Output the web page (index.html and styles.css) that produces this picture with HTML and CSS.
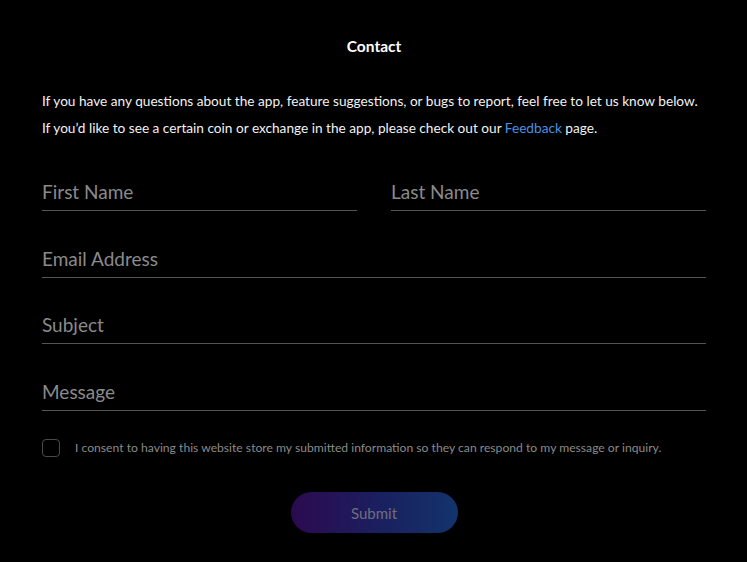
FILE: index.html
```html
<!DOCTYPE html>
<html>
<head>
<meta charset="utf-8">
<link rel="stylesheet" href="styles.css">
</head>
<body>
<main class="page">
  <h1 class="title">Contact</h1>
  <p class="intro">If you have any questions about the app, feature suggestions, or bugs to report, feel free to let us know below.</p>
  <p class="intro">If you’d like to see a certain coin or exchange in the app, please check out our <a class="link" href="#">Feedback</a> page.</p>
  <form class="form">
    <div class="row">
      <input class="field" type="text" placeholder="First Name">
      <input class="field" type="text" placeholder="Last Name">
    </div>
    <input class="field" type="email" placeholder="Email Address">
    <input class="field" type="text" placeholder="Subject">
    <input class="field" type="text" placeholder="Message">
    <label class="consent">
      <span class="box"></span>
      <span class="consent-text">I consent to having this website store my submitted information so they can respond to my message or inquiry.</span>
    </label>
    <div class="actions">
      <button class="submit" type="button">Submit</button>
    </div>
  </form>
</main>
</body>
</html>
```
FILE: styles.css
```css
html, body {
  margin: 0;
  padding: 0;
  background: #000;
}
body {
  font-family: "Lato", "Noto Sans", sans-serif;
  color: #fff;
}
.page {
  padding: 36px 41px 0 42px;
}
.title {
  margin: 0 0 35px;
  text-align: center;
  font-size: 15.5px;
  font-weight: 700;
  line-height: 20px;
  color: #fff;
}
.intro {
  margin: 0 0 7px;
  font-size: 13.65px;
  line-height: 20px;
  color: #f2f2f2;
}
.link {
  color: #4a90e2;
  text-decoration: none;
}
.form {
  display: flex;
  flex-direction: column;
  gap: 32.67px;
  margin-top: 39px;
}
.row {
  display: flex;
  gap: 34px;
}
.field {
  display: block;
  width: 100%;
  box-sizing: border-box;
  background: transparent;
  border: 0;
  border-bottom: 1px solid #555;
  padding: 0 0 4px;
  height: 34px;
  font-family: "Lato", "Noto Sans", sans-serif;
  font-size: 19px;
  color: #ccc;
  outline: none;
}
.row .field { flex: 1; }
.field::placeholder { color: #8a8a8a; }
.consent {
  display: flex;
  align-items: center;
  gap: 15px;
  margin-top: -5px;
}
.box {
  width: 18px;
  height: 18px;
  box-sizing: border-box;
  border: 1.5px solid #4a4a4a;
  border-radius: 4px;
  flex: none;
}
.consent-text {
  font-size: 12.15px;
  color: #8a8a8a;
}
.actions {
  display: flex;
  justify-content: center;
  margin-top: 3px;
}
.submit {
  width: 167px;
  height: 41px;
  border: 0;
  border-radius: 21px;
  background: linear-gradient(90deg, #2b0a4f 0%, #1a2060 55%, #12346c 100%);
  color: #6e6e7e;
  font-family: "Lato", "Noto Sans", sans-serif;
  font-size: 15px;
}
```
